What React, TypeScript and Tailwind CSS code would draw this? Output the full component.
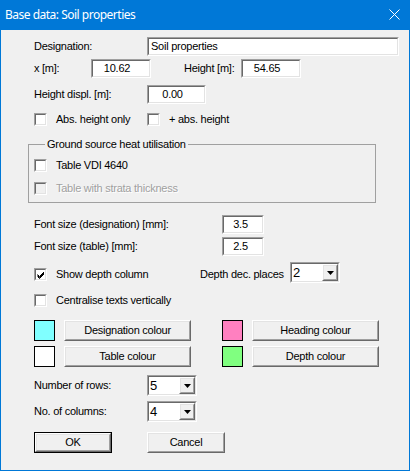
import type { ReactNode } from "react";

function Sunken({ className = "", inner = "bg-white", children }: { className?: string; inner?: string; children?: ReactNode }) {
  return (
    <div className={`border border-t-[#a0a0a0] border-l-[#a0a0a0] border-r-white border-b-white ${className}`}>
      <div className={`h-full w-full border border-t-[#696969] border-l-[#696969] border-r-[#e3e3e3] border-b-[#e3e3e3] ${inner}`}>
        {children}
      </div>
    </div>
  );
}

function Raised({ className = "", children }: { className?: string; children?: ReactNode }) {
  return (
    <div className={`border border-t-white border-l-white border-r-[#696969] border-b-[#696969] ${className}`}>
      <div className="flex h-full w-full items-center justify-center border border-t-[#e3e3e3] border-l-[#e3e3e3] border-r-[#a0a0a0] border-b-[#a0a0a0] bg-[#f0f0f0]">
        {children}
      </div>
    </div>
  );
}

function Field({ value, className, align = "text-center pr-[8px]" }: { value: string; className: string; align?: string }) {
  return (
    <Sunken className={className}>
      <div className={`flex h-full items-center leading-none ${align}`}>
        <span className="w-full">{value}</span>
      </div>
    </Sunken>
  );
}

function Combo({ value }: { value: string }) {
  return (
    <Sunken className="h-[21px] w-[50px]">
      <div className="flex h-full">
        <div className="flex flex-1 items-center pl-[1px] text-[13px] leading-none">{value}</div>
        <Raised className="h-full w-[16px]">
          <svg width="7" height="4" viewBox="0 0 7 4">
            <path d="M0 0h7L3.5 4z" fill="#000" />
          </svg>
        </Raised>
      </div>
    </Sunken>
  );
}

function Check({ label, checked = false, disabled = false }: { label: string; checked?: boolean; disabled?: boolean }) {
  return (
    <div className="flex h-[13px] items-center">
      <Sunken className="h-[13px] w-[13px]" inner={disabled ? "bg-[#f0f0f0]" : "bg-white"}>
        {checked && (
          <svg width="11" height="11" viewBox="0 0 11 11" className="block">
            <path d="M1.5 4.5l2 2 4.5-4.5M1.5 5.5l2 2 4.5-4.5M1.5 6.5l2 2 4.5-4.5" stroke="#000" strokeWidth="1" fill="none" />
          </svg>
        )}
      </Sunken>
      <span
        className={`ml-[9px] whitespace-nowrap ${disabled ? "text-[#a0a0a0] [text-shadow:1px_1px_0_#fff]" : ""}`}
      >
        {label}
      </span>
    </div>
  );
}

function ColourButton({ label, swatch }: { label: string; swatch: string }) {
  return (
    <div className="flex items-center">
      <div className={`h-[21px] w-[21px] border border-black ${swatch}`} />
      <Raised className="ml-[9px] h-[21px] w-[127px]">{label}</Raised>
    </div>
  );
}

export default function App() {
  return (
    <div className="flex h-[471px] w-[410px] flex-col font-['Liberation_Sans',Arial,sans-serif] text-[11px] tracking-[-0.25px] text-black">
      <div className="flex h-[30px] shrink-0 items-center justify-between bg-[#0078d7] pl-[5px] pr-[10px] font-['Noto_Sans',sans-serif] text-[12px] tracking-[-0.5px] text-white">
        <span className="-mt-[1px]">Base data: Soil properties</span>
        <svg width="11" height="11" viewBox="0 0 11 11" className="-mt-[2px]">
          <path d="M0.5 0.5l10 10M10.5 0.5l-10 10" stroke="#fff" strokeWidth="1" />
        </svg>
      </div>
      <div className="flex-1 border-x border-b border-[#0078d7] bg-[#f0f0f0] pl-[33px]">
        <div className="mt-[7px] flex h-[19px] items-center">
          <span className="w-[113px]">Designation:</span>
          <Field value="Soil properties" className="h-[19px] w-[252px]" align="pl-[2px]" />
        </div>

        <div className="mt-[3px] flex h-[19px] items-center">
          <span className="w-[57px]">x [m]:</span>
          <Field value="10.62" className="h-[19px] w-[60px]" />
          <span className="ml-[33px] w-[57px]">Height [m]:</span>
          <Field value="54.65" className="h-[19px] w-[60px]" />
        </div>

        <div className="mt-[7px] flex h-[19px] items-center">
          <span className="w-[113px]">Height displ. [m]:</span>
          <Field value="0.00" className="h-[19px] w-[59px]" />
        </div>

        <div className="mt-[9px] flex">
          <div className="w-[113px]">
            <Check label="Abs. height only" />
          </div>
          <Check label="+ abs. height" />
        </div>

        <fieldset className="-ml-[6px] mt-[12px] h-[65px] w-[348px] border border-[#a0a0a0] pl-[5px] pt-[8px]">
          <legend className="ml-[11px] px-[2px] leading-[13px]">Ground source heat utilisation</legend>
          <Check label="Table VDI 4640" />
          <div className="mt-[10px]">
            <Check label="Table with strata thickness" disabled />
          </div>
        </fieldset>

        <div className="mt-[12px] flex h-[19px] items-center">
          <span className="w-[188px]">Font size (designation) [mm]:</span>
          <Field value="3.5" className="h-[19px] w-[42px]" align="text-center pr-[5px]" />
        </div>
        <div className="mt-[3px] flex h-[19px] items-center">
          <span className="w-[188px]">Font size (table) [mm]:</span>
          <Field value="2.5" className="h-[19px] w-[42px]" align="text-center pr-[5px]" />
        </div>

        <div className="mt-[6px] flex h-[21px] items-start">
          <div className="mt-[6px] w-[166px]">
            <Check label="Show depth column" checked />
          </div>
          <span className="mt-[4px] w-[90px] whitespace-nowrap">Depth dec. places</span>
          <Combo value="2" />
        </div>

        <div className="mt-[11px]">
          <Check label="Centralise texts vertically" />
        </div>

        <div className="mt-[13px] flex">
          <div className="w-[188px]">
            <ColourButton label="Designation colour" swatch="bg-[#80ffff]" />
          </div>
          <ColourButton label="Heading colour" swatch="bg-[#ff80c0]" />
        </div>
        <div className="mt-[5px] flex">
          <div className="w-[188px]">
            <ColourButton label="Table colour" swatch="bg-white" />
          </div>
          <ColourButton label="Depth colour" swatch="bg-[#80ff80]" />
        </div>

        <div className="mt-[8px] flex h-[21px] items-center">
          <span className="w-[113px]">Number of rows:</span>
          <Combo value="5" />
        </div>
        <div className="mt-[5px] flex h-[21px] items-center">
          <span className="w-[113px]">No. of columns:</span>
          <Combo value="4" />
        </div>

        <div className="mt-[10px] flex">
          <div className="w-[113px]">
            <div className="h-[21px] w-[78px] border border-black">
              <Raised className="h-full w-full">OK</Raised>
            </div>
          </div>
          <Raised className="h-[21px] w-[78px]">Cancel</Raised>
        </div>
      </div>
    </div>
  );
}
